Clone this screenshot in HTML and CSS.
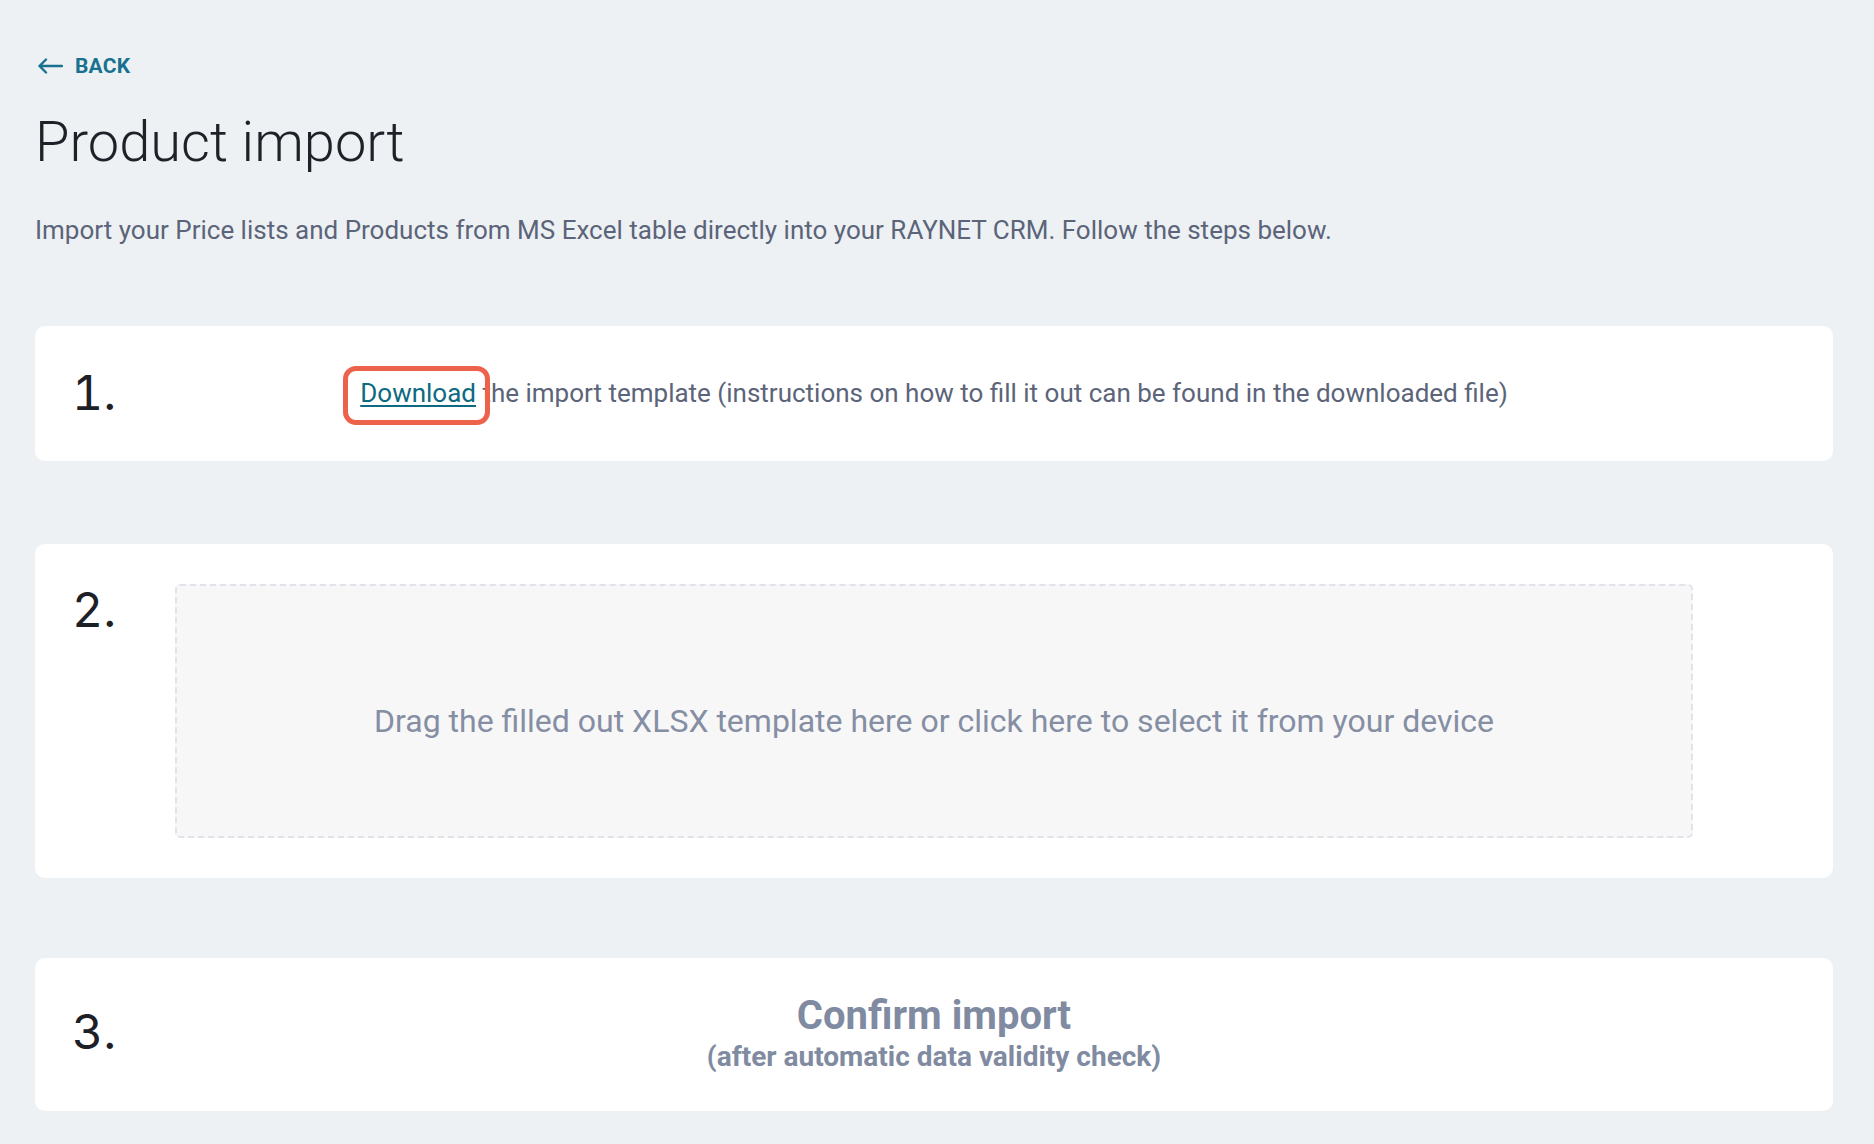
FILE: index.html
```html
<!DOCTYPE html>
<html lang="en">
<head>
<meta charset="utf-8">
<title>Product import</title>
<link rel="stylesheet" href="styles.css">
</head>
<body>
<div class="page">
  <a class="back" href="#">
    <svg class="back-arrow" width="26" height="16" viewBox="0 0 26 16" aria-hidden="true">
      <path d="M25 8H2.5M9 1.5L2.5 8L9 14.5" fill="none" stroke="currentColor" stroke-width="2.4" stroke-linecap="round" stroke-linejoin="round"/>
    </svg>
    <span>BACK</span>
  </a>
  <h1 class="title">Product import</h1>
  <p class="intro">Import your Price lists and Products from MS Excel table directly into your RAYNET CRM. Follow the steps below.</p>

  <section class="card card-one">
    <div class="step-num">1.</div>
    <div class="step-body">
      <p class="step-text"><a class="dl-link" href="#">Download</a> the import template (instructions on how to fill it out can be found in the downloaded file)</p>
    </div>
  </section>

  <section class="card card-two">
    <div class="step-num">2.</div>
    <div class="dropzone">
      <span class="drop-text">Drag the filled out XLSX template here or click here to select it from your device</span>
    </div>
  </section>

  <section class="card card-three">
    <div class="step-num">3.</div>
    <div class="confirm">
      <div class="confirm-title">Confirm import</div>
      <div class="confirm-sub">(after automatic data validity check)</div>
    </div>
  </section>
</div>
</body>
</html>
```

FILE: styles.css
```css
html, body {
  margin: 0;
  padding: 0;
  background: #edf1f4;
}

body {
  font-family: Roboto, "Liberation Sans", Arial, sans-serif;
  color: #1e2228;
}

.page {
  padding: 50px 41px 40px 35px;
}

.back {
  display: flex;
  align-items: center;
  gap: 12px;
  height: 32px;
  color: #17718f;
  text-decoration: none;
  font-size: 21px;
  font-weight: 700;
  letter-spacing: 0.2px;
  padding-left: 2px;
}

.back-arrow {
  display: block;
}

.title {
  margin: 27px 0 0;
  font-size: 56px;
  line-height: 1.2;
  font-weight: 300;
  color: #1e2228;
  letter-spacing: 0;
}

.intro {
  margin: 36px 0 0;
  font-size: 26px;
  line-height: 1.4;
  color: #5b6479;
}

.card {
  background: #ffffff;
  border-radius: 10px;
  display: grid;
  grid-template-columns: 140px 1fr 140px;
  align-items: center;
}

.step-num {
  font-family: Inter, "Noto Sans", sans-serif;
  font-size: 48px;
  line-height: 1;
  font-weight: 400;
  font-feature-settings: "tnum" 1;
  font-variant-numeric: tabular-nums;
  color: #1d2127;
  padding-left: 37px;
}

.card-one {
  margin-top: 77px;
  min-height: 135px;
  box-sizing: border-box;
}

.step-body {
  text-align: center;
}

.step-text {
  margin: 0;
  font-size: 26px;
  line-height: 1.4;
  color: #5b6479;
}

.dl-link {
  position: relative;
  color: #0d6a80;
  text-decoration: underline;
  text-underline-offset: 3px;
  text-decoration-thickness: 2px;
}

.dl-link::after {
  content: "";
  position: absolute;
  top: -12px;
  bottom: -17px;
  left: -17px;
  right: -14px;
  border: 5px solid #ec624a;
  border-radius: 13px;
  pointer-events: none;
}

.card-two {
  margin-top: 83px;
  padding: 40px 0;
  align-items: start;
}

.card-two .step-num {
  margin-top: 2px;
}

.dropzone {
  height: 254px;
  box-sizing: border-box;
  background: #f7f7f8;
  border: 2px dashed #e2e3ea;
  border-radius: 5px;
  display: flex;
  align-items: center;
  justify-content: center;
  padding-top: 23px;
}

.drop-text {
  font-size: 32px;
  line-height: 1.3;
  color: #858ea3;
}

.card-three {
  margin-top: 80px;
  padding: 34px 0 38px;
}

.confirm {
  text-align: center;
  color: #808ba1;
  font-weight: 700;
}

.confirm-title {
  font-size: 40px;
  line-height: 1.2;
}

.confirm-sub {
  margin-top: 0;
  font-size: 28px;
  line-height: 1.2;
}
```
